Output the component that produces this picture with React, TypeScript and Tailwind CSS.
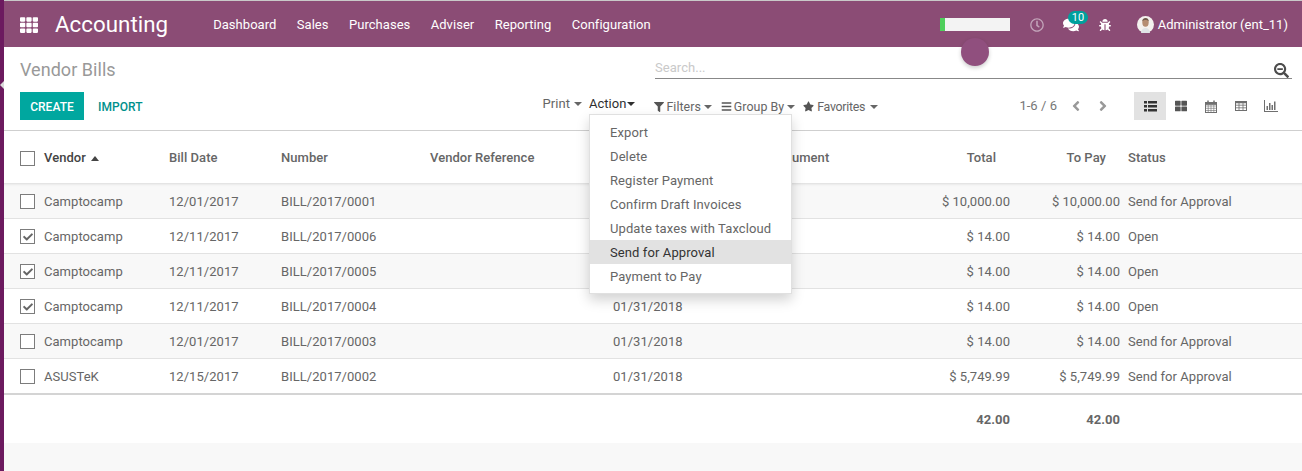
import React from "react";
import { FaTh, FaThLarge, FaRegClock, FaComments, FaBug, FaFilter, FaBars, FaStar, FaSearchMinus, FaAngleLeft, FaAngleRight, FaCheck } from "react-icons/fa";

const rows = [
  { v: "Camptocamp", d: "12/01/2017", n: "BILL/2017/0001", due: "", t: "$ 10,000.00", p: "$ 10,000.00", s: "Send for Approval", c: false },
  { v: "Camptocamp", d: "12/11/2017", n: "BILL/2017/0006", due: "", t: "$ 14.00", p: "$ 14.00", s: "Open", c: true },
  { v: "Camptocamp", d: "12/11/2017", n: "BILL/2017/0005", due: "", t: "$ 14.00", p: "$ 14.00", s: "Open", c: true },
  { v: "Camptocamp", d: "12/11/2017", n: "BILL/2017/0004", due: "01/31/2018", t: "$ 14.00", p: "$ 14.00", s: "Open", c: true },
  { v: "Camptocamp", d: "12/01/2017", n: "BILL/2017/0003", due: "01/31/2018", t: "$ 14.00", p: "$ 14.00", s: "Send for Approval", c: false },
  { v: "ASUSTeK", d: "12/15/2017", n: "BILL/2017/0002", due: "01/31/2018", t: "$ 5,749.99", p: "$ 5,749.99", s: "Send for Approval", c: false },
];
const menu = ["Export", "Delete", "Register Payment", "Confirm Draft Invoices", "Update taxes with Taxcloud", "Send for Approval", "Payment to Pay"];

function Check({ on }: { on: boolean }) {
  return (
    <span className="flex h-[15px] w-[15px] items-center justify-center border border-[#7c7c7c] bg-white text-[#666]">
      {on && <FaCheck className="text-[10px]" />}
    </span>
  );
}

function Caret() {
  return <span className="inline-block h-0 w-0 border-x-[4px] border-t-[4px] border-x-transparent border-t-current" />;
}

function Avatar() {
  return (
    <svg width="17" height="17" viewBox="0 0 17 17" className="shrink-0">
      <circle cx="8.5" cy="8.5" r="8.5" fill="#f4f1ee" />
      <ellipse cx="8.500" cy="6.600" rx="3.200" ry="4.200" fill="#b58d72" />
      <path d="M5.200 5.600C5.400 2.800 7 2 8.600 2s3.200.9 3.200 3.600c-1-1.300-2-1.500-3.200-1.500s-2.400.3-3.400 1.500z" fill="#6f5a4a" />
      <path d="M4 17c.3-3.500 2-5 4.500-5s4.200 1.500 4.500 5z" fill="#dfe3e6" />
    </svg>
  );
}

function ListIcon() {
  return (
    <svg width="13" height="11" viewBox="0 0 13 11" fill="#333">
      <rect x="0" y="0" width="3" height="2.500" />
      <rect x="4" y="0" width="9" height="2.500" />
      <rect x="0" y="4" width="3" height="2.500" />
      <rect x="4" y="4" width="9" height="2.500" />
      <rect x="0" y="8" width="3" height="2.500" />
      <rect x="4" y="8" width="9" height="2.500" />
    </svg>
  );
}

function CalendarIcon() {
  return (
    <svg width="12" height="13" viewBox="0 0 12 13" fill="none" stroke="#6f6f6f" strokeWidth="1">
      <rect x="0.500" y="2.500" width="11" height="10" />
      <path d="M0.500 6h11M0.500 8.300h11M0.500 10.500h11M3.200 5v7M6 5v7M8.800 5v7" strokeWidth="0.600" />
      <path d="M3 0.500v2.500M9 0.500v2.500" strokeWidth="1.500" />
      <rect x="0.500" y="2.500" width="11" height="1.800" fill="#6f6f6f" />
    </svg>
  );
}

function TableIcon() {
  return (
    <svg width="12" height="10" viewBox="0 0 12 10" fill="none" stroke="#6f6f6f" strokeWidth="1">
      <rect x="0.500" y="0.500" width="11" height="9" />
      <path d="M0.500 1.500h11" strokeWidth="1.500" />
      <path d="M0.500 4.200h11M0.500 6.800h11M4 2v7.500M8 2v7.500" strokeWidth="0.800" />
    </svg>
  );
}

function ChartIcon() {
  return (
    <svg width="14" height="12" viewBox="0 0 14 12" fill="#6f6f6f">
      <path d="M0 0h1v11h13v1H0z" />
      <rect x="2.500" y="6" width="1.500" height="4" />
      <rect x="5" y="3" width="1.500" height="7" />
      <rect x="7.500" y="5" width="1.500" height="5" />
      <rect x="10" y="1.500" width="1.500" height="8.500" />
    </svg>
  );
}

export default function App() {
  return (
    <div className="relative flex h-[471px] w-[1302px] overflow-hidden bg-[#f8f8f8] font-['Roboto',sans-serif] text-[13px] tracking-[0.04px] text-[#666]">
      <div className="relative w-[4px] shrink-0 bg-[#6c1a5f]">
        <span className="absolute left-0 top-[81px] h-0 w-0 border-y-[4px] border-r-[4px] border-y-transparent border-r-[#d9d9d9]" />
      </div>
      <div className="flex min-w-0 flex-1 flex-col">
        <header className="flex h-[47px] shrink-0 items-center border-t border-[#c9c9c9] bg-[#8b4c75] pt-[1px] text-white">
          <FaTh className="ml-[16px] text-[18px]" />
          <span className="ml-[17px] text-[22.300px] leading-none">Accounting</span>
          <nav className="ml-[45px] flex gap-[20.400px] text-[13px]">
            <span>Dashboard</span>
            <span>Sales</span>
            <span>Purchases</span>
            <span>Adviser</span>
            <span>Reporting</span>
            <span>Configuration</span>
          </nav>
          <div className="ml-auto flex items-center">
            <div className="h-[13px] w-[70px] bg-[#f3f3f3]">
              <div className="h-full w-[5px] bg-[#4fcf5c]" />
            </div>
            <FaRegClock className="ml-[20px] text-[14px] text-[#c3a5ba]" />
            <span className="relative ml-[19px]">
              <FaComments className="text-[16px]" />
              <span className="absolute left-[5px] top-[-6px] rounded-full bg-[#00a09d] px-[4px] text-[11px] leading-[13px] text-white">10</span>
            </span>
            <FaBug className="ml-[20px] text-[12px]" />
            <span className="ml-[26px]"><Avatar /></span>
            <span className="ml-[4px] mr-[14px] text-[13px] tracking-[0.02px]">Administrator (ent_11)</span>
          </div>
        </header>

        <section className="flex h-[84px] shrink-0 flex-col border-b border-[#cfcfcf] bg-white pl-[16px] pr-[10px]">
          <div className="flex h-[45px] items-start justify-between">
            <h1 className="pt-[12px] text-[18px] leading-[21px] text-[#999]">Vendor Bills</h1>
            <div className="mt-[10px] flex h-[22px] w-[637px] items-center justify-between border-b border-[#888] text-[13px] text-[#c9c9c9]">
              <span>Search...</span>
              <FaSearchMinus className="relative top-[3px] mr-[3px] text-[15px] text-[#4c4c4c]" />
            </div>
          </div>
          <div className="flex items-center pr-[6px]">
            <button className="h-[28px] w-[64px] bg-[#00a79f] pt-[1px] text-[12px] font-medium text-white">CREATE</button>
            <button className="ml-[14px] pt-[1px] text-[12px] font-medium text-[#00908c]">IMPORT</button>
            <div className="ml-[400px] flex pb-[4px]">
              <span className="flex items-center">Print<span className="ml-[4px] flex"><Caret /></span></span>
              <span className="ml-[7px] flex items-center text-[#2f2f2f]">Action<span className="ml-[1px] flex"><Caret /></span></span>
            </div>
            <div className="ml-[19px] flex items-center pt-[2px] text-[12.400px] text-[#666]">
              <FaFilter className="text-[10px] text-[#555]" />
              <span className="ml-[2px]">Filters</span>
              <span className="ml-[3px] flex"><Caret /></span>
              <FaBars className="ml-[9px] text-[11px] text-[#555]" />
              <span className="ml-[2px]">Group By</span>
              <span className="ml-[3px] flex"><Caret /></span>
              <FaStar className="ml-[8px] text-[11px] text-[#555]" />
              <span className="ml-[3px] tracking-[-0.3px]">Favorites</span>
              <span className="ml-[5px] flex"><Caret /></span>
            </div>
            <span className="ml-auto text-[13px] text-[#777]">1-6 / 6</span>
            <FaAngleLeft className="ml-[11px] text-[16px] text-[#999]" />
            <FaAngleRight className="ml-[11px] text-[16px] text-[#999]" />
            <div className="ml-[23px] flex items-center">
              <span className="flex h-[28px] w-[32px] items-center justify-center bg-[#e2e2e2]"><ListIcon /></span>
              <span className="flex h-[28px] w-[30px] items-center justify-center"><FaThLarge className="text-[12px] text-[#555]" /></span>
              <span className="flex h-[28px] w-[30px] items-center justify-center"><CalendarIcon /></span>
              <span className="flex h-[28px] w-[30px] items-center justify-center"><TableIcon /></span>
              <span className="flex h-[28px] w-[30px] items-center justify-center"><ChartIcon /></span>
            </div>
          </div>
        </section>

        <table className="w-full table-fixed border-collapse">
          <colgroup>
            <col className="w-[40px]" />
            <col className="w-[125px]" />
            <col className="w-[112px]" />
            <col className="w-[149px]" />
            <col className="w-[183px]" />
            <col className="w-[112px]" />
            <col className="w-[175px]" />
            <col className="w-[110px]" />
            <col className="w-[110px]" />
            <col />
          </colgroup>
          <thead>
            <tr className="h-[52px] bg-white text-left text-[#666]">
              <th className="pl-[16px] pt-[2px] font-medium"><Check on={false} /></th>
              <th className="pt-[2px] font-medium text-[#444]"><span className="flex items-center gap-[5px]">Vendor <span className="inline-block h-0 w-0 border-x-[4.500px] border-b-[5px] border-x-transparent border-b-current" /></span></th>
              <th className="pt-[2px] font-medium">Bill Date</th>
              <th className="pt-[2px] font-medium">Number</th>
              <th className="pt-[2px] font-medium">Vendor Reference</th>
              <th className="pt-[2px] font-medium" />
              <th className="pt-[2px] font-medium">Source Document</th>
              <th className="pr-[14px] pt-[2px] text-right font-medium">Total</th>
              <th className="pr-[14px] pt-[2px] text-right font-medium">To Pay</th>
              <th className="pl-[8px] pt-[2px] font-medium">Status</th>
            </tr>
          </thead>
          <tbody>
            {rows.map((r, i) => (
              <tr
                key={r.n}
                className={`border-b border-[#e2e2e2] ${i === 5 ? "h-[36px]" : "h-[35px]"} ${i % 2 === 0 ? "bg-[#f8f8f8]" : "bg-white"} ${i === 0 ? "shadow-[inset_0_3px_3px_-2px_rgba(0,0,0,0.12)]" : ""}`}
              >
                <td className="pl-[16px] pt-[2px]"><Check on={r.c} /></td>
                <td className="pt-[2px]">{r.v}</td>
                <td className="pt-[2px]">{r.d}</td>
                <td className="pt-[2px]">{r.n}</td>
                <td />
                <td className="pt-[2px]">{r.due}</td>
                <td />
                <td className="pt-[2px] text-right">{r.t}</td>
                <td className="pt-[2px] text-right">{r.p}</td>
                <td className="pl-[8px] pt-[2px]">{r.s}</td>
              </tr>
            ))}
          </tbody>
          <tfoot>
            <tr className="h-[49px] border-t-2 border-[#d4d4d4] bg-white">
              <td colSpan={7} />
              <td className="pt-[2px] text-right font-bold">42.00</td>
              <td className="pt-[2px] text-right font-bold">42.00</td>
              <td />
            </tr>
          </tfoot>
        </table>
      </div>

      <div className="absolute left-[961px] top-[38px] h-[28px] w-[28px] rounded-full bg-[#904f7e] shadow-[0_2px_4px_rgba(0,0,0,0.2)]" />

      <ul className="absolute left-[589px] top-[114px] w-[203px] border border-[#e0e0e0] bg-white py-[5px] tracking-[0.1px] shadow-[0_6px_12px_rgba(0,0,0,0.175)]">
        {menu.map((m) => (
          <li key={m} className={`h-[24px] pl-[20px] leading-[26px] ${m === "Send for Approval" ? "bg-[#e2e2e2] text-[#333]" : ""}`}>{m}</li>
        ))}
      </ul>
    </div>
  );
}
